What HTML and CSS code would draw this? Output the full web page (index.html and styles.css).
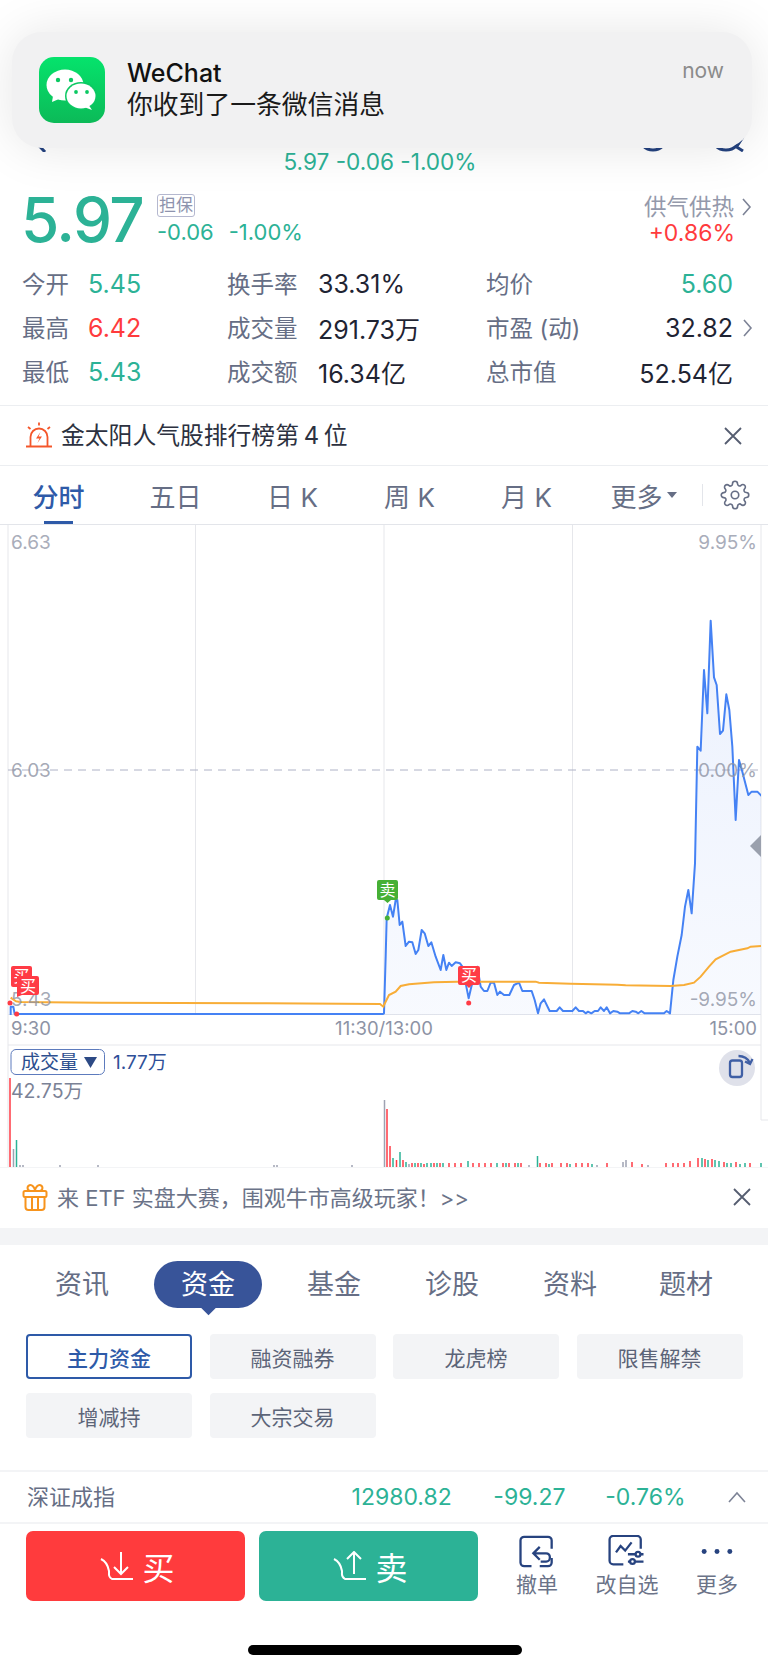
FILE: index.html
```html
<!DOCTYPE html>
<html lang="zh">
<head>
    <meta charset="UTF-8">
    <title>行情</title>
    <link rel="stylesheet" href="styles.css">
</head>
<body>
<div id="app">

    <div class="notify">
        <svg class="notify-icon" width="66" height="66" viewBox="0 0 66 66">
            <defs>
                <linearGradient id="wxGreen" x1="0" y1="0" x2="0" y2="1">
                    <stop offset="0" stop-color="#05e36c"/>
                    <stop offset="1" stop-color="#0cba58"/>
                </linearGradient>
            </defs>
            <rect width="66" height="66" rx="15" fill="url(#wxGreen)"/>
            <path d="M14 39l-1 6 7-3z" fill="#fff"/>
            <ellipse cx="26" cy="28" rx="18.500" ry="15.500" fill="#fff"/>
            <circle cx="19" cy="23" r="2.200" fill="#0bc862"/>
            <circle cx="32" cy="23" r="2.200" fill="#0bc862"/>
            <ellipse cx="42" cy="39" rx="16" ry="14" fill="#0bc862"/>
            <path d="M49 47l4 6-8-3z" fill="#fff"/>
            <ellipse cx="42" cy="39" rx="14.500" ry="12.500" fill="#fff"/>
            <circle cx="37" cy="35" r="1.900" fill="#0bc862"/>
            <circle cx="48" cy="35" r="1.900" fill="#0bc862"/>
        </svg>
        <div class="notify-text">
            <div class="notify-title">WeChat</div>
            <div class="notify-body">你收到了一条微信消息</div>
        </div>
        <div class="notify-time">now</div>
    </div>

    <div class="nav">
        <svg width="768" height="152" viewBox="0 0 768 152">
            <path d="M45 114L27 133L45 152" class="nav-stroke"/>
            <circle cx="653" cy="136" r="14" class="nav-stroke"/>
            <circle cx="726" cy="135" r="15" class="nav-stroke"/>
            <path d="M735 146L743 151M737 146L743 137" class="nav-stroke"/>
        </svg>
    </div>
    <div class="nav-sub">5.97 -0.06 -1.00%</div>

    <div class="quote">
        <div class="price">5.97</div>
        <div class="change">
            <span class="badge">担保</span>
            <div class="change-nums"><span>-0.06</span><span>-1.00%</span></div>
        </div>
        <div class="supply">
            <div class="supply-top">供气供热
                <svg width="10" height="18" viewBox="0 0 10 18"><path d="M1 1l7 8-7 8" class="chev"/></svg>
            </div>
            <div class="supply-num">+0.86%</div>
        </div>
    </div>

    <div class="stats">
        <span class="lbl">今开</span><span class="val down">5.45</span>
        <span class="lbl">换手率</span><span class="val">33.31%</span>
        <span class="lbl">均价</span><span class="val right down">5.60</span><span></span>

        <span class="lbl">最高</span><span class="val up">6.42</span>
        <span class="lbl">成交量</span><span class="val">291.73万</span>
        <span class="lbl">市盈 (动)</span><span class="val right">32.82</span>
        <svg class="stats-chev" width="10" height="18" viewBox="0 0 10 18"><path d="M1 1l7 8-7 8" class="chev"/></svg>

        <span class="lbl">最低</span><span class="val down">5.43</span>
        <span class="lbl">成交额</span><span class="val">16.34亿</span>
        <span class="lbl">总市值</span><span class="val right">52.54亿</span><span></span>
    </div>

    <div class="alert">
        <svg width="28" height="30" viewBox="0 0 28 30" fill="none" stroke="#f4562a" stroke-width="1.800">
            <path d="M5.500 25V16a8.500 8.500 0 0 1 17 0v9"/>
            <path d="M1 25.500h26" stroke-width="2"/>
            <path d="M14 1.500v3M3 6l2.500 2M25 6l-2.500 2"/>
            <path d="M15.500 11l-4.500 6.500h3.500L12.500 22l4.500-6.500h-3.500z" fill="#f4562a" stroke="none"/>
        </svg>
        <span class="alert-text">金太阳人气股排行榜第 4 位</span>
        <svg class="close" width="18" height="18" viewBox="0 0 18 18"><path d="M1 1l16 16M17 1L1 17"/></svg>
    </div>

    <div class="tabs">
        <div class="tab active">分时</div>
        <div class="tab">五日</div>
        <div class="tab">日 K</div>
        <div class="tab">周 K</div>
        <div class="tab">月 K</div>
        <div class="tab">更多<i class="caret"></i></div>
        <div class="tab-tool">
            <svg width="30" height="30" viewBox="0 0 24 24" fill="none" stroke="#666e85" stroke-width="1.300" stroke-linejoin="round">
                <circle cx="12" cy="12" r="3"/>
                <path d="M19.400 15a1.650 1.650 0 0 0 .33 1.820l.06.06a2 2 0 0 1 0 2.830 2 2 0 0 1-2.830 0l-.06-.06a1.650 1.650 0 0 0-1.820-.33 1.650 1.650 0 0 0-1 1.510V21a2 2 0 0 1-2 2 2 2 0 0 1-2-2v-.09A1.650 1.650 0 0 0 9 19.400a1.650 1.650 0 0 0-1.820.33l-.06.06a2 2 0 0 1-2.830 0 2 2 0 0 1 0-2.830l.06-.06a1.650 1.650 0 0 0 .33-1.820 1.650 1.650 0 0 0-1.510-1H3a2 2 0 0 1-2-2 2 2 0 0 1 2-2h.09A1.650 1.650 0 0 0 4.600 9a1.650 1.650 0 0 0-.33-1.820l-.06-.06a2 2 0 0 1 0-2.830 2 2 0 0 1 2.830 0l.06.06a1.650 1.650 0 0 0 1.820.33H9a1.650 1.650 0 0 0 1-1.510V3a2 2 0 0 1 2-2 2 2 0 0 1 2 2v.09a1.650 1.650 0 0 0 1 1.510 1.650 1.650 0 0 0 1.820-.33l.06-.06a2 2 0 0 1 2.830 0 2 2 0 0 1 0 2.830l-.06.06a1.650 1.650 0 0 0-.33 1.820V9a1.650 1.650 0 0 0 1.510 1H21a2 2 0 0 1 2 2 2 2 0 0 1-2 2h-.09a1.650 1.650 0 0 0-1.510 1z"/>
            </svg>
        </div>
    </div>

    <svg class="chart" width="768" height="642" viewBox="0 525 768 642">
        <defs>
            <linearGradient id="areaFill" x1="0" y1="0" x2="0" y2="1">
                <stop offset="0" stop-color="#4d80f0" stop-opacity=".11"/>
                <stop offset="1" stop-color="#4d80f0" stop-opacity=".04"/>
            </linearGradient>
        </defs>

        <!-- grid -->
        <path d="M8 525V1167M195.500 525V1014M384 525V1014M572.500 525V1014M761 525V1120M8 1045H761M761 1120H768M8 1014.500H761" class="grid"/>
        <path d="M8 770H761" class="dash"/>

        <!-- price + average, traced in 3x coordinates -->
        <svg x="8" y="525" width="753" height="490" viewBox="-1128 -195 2259 1470">
            <path class="price" d="M-1120 1290L-1120 1250L-1112 1250L-1108 1272L-3 1272L0 1270L5 1100L8 985L18 945L27 980L35 930L40 930L47 1005L55 995L65 1068L75 1055L85 1057L95 1092L103 1080L113 1020L122 1030L133 1068L142 1057L155 1100L170 1140L178 1095L187 1140L195 1118L203 1128L215 1117L228 1120L235 1130L247 1190L254 1225L262 1190L280 1130L290 1190L300 1203L310 1203L320 1178L330 1178L340 1215L348 1205L360 1215L376 1215L390 1185L405 1178L415 1203L443 1203L452 1230L462 1270L470 1240L480 1228L497 1263L518 1263L527 1252L537 1263L565 1263L575 1252L585 1263L597 1263L605 1270L612 1265L622 1270L632 1263L642 1263L650 1252L660 1263L668 1252L678 1270L688 1263L700 1265L708 1270L735 1270L745 1263L755 1265L763 1270L772 1263L782 1270L840 1270L848 1263L858 1270L868 1170L880 1100L893 1035L903 950L913 900L923 970L933 820L940 470L950 482L960 240L970 370L980 92L990 262L998 285L1008 432L1017 422L1027 313L1036 360L1045 470L1055 690L1065 510L1075 545L1093 615L1103 605L1120 605L1135 620L1160 620L1160 1290Z"/>
            <path class="avg" d="M-1120 1223L-1104 1234L-1092 1236L-852 1238L-352 1240L-12 1242L-2 1250L0 1245L15 1215L35 1205L50 1188L75 1183L150 1177L220 1175L455 1175L465 1178L560 1181L700 1184L725 1186L860 1188L900 1185L930 1178L950 1160L975 1130L995 1108L1040 1085L1090 1075L1100 1070L1135 1068"/>
        </svg>

        <!-- axis labels -->
        <text x="11" y="549" class="axis">6.63</text>
        <text x="757" y="549" class="axis end">9.95%</text>
        <text x="11" y="777" class="axis dim">6.03</text>
        <text x="757" y="777" class="axis end dim">0.00%</text>
        <text x="11" y="1006" class="axis dim">5.43</text>
        <text x="757" y="1006" class="axis end dim">-9.95%</text>
        <text x="11" y="1035" class="axis time">9:30</text>
        <text x="384" y="1035" class="axis time mid">11:30/13:00</text>
        <text x="757" y="1035" class="axis time end">15:00</text>
        <path d="M750 846L761 835V857Z" fill="#9aa0ad"/>

        <!-- trade flags -->
        <rect x="11" y="966" width="21" height="21" rx="2" fill="#ff3b45"/>
        <text x="21.500" y="982" class="flag">买</text>
        <path d="M17 976h20a2 2 0 0 1 2 2v15a2 2 0 0 1-2 2H22l-5 2Z" fill="#ff3b45"/>
        <text x="28" y="992" class="flag">买</text>
        <circle cx="10" cy="1003" r="2.500" fill="#ff3b45"/>
        <circle cx="16.700" cy="1014" r="2.500" fill="#ff3b45"/>

        <path d="M379 880h17a2 2 0 0 1 2 2v16a2 2 0 0 1-2 2h-5l-3.500 3-3.500-3h-5a2 2 0 0 1-2-2v-16a2 2 0 0 1 2-2Z" fill="#46b035"/>
        <text x="387.500" y="896" class="flag">卖</text>
        <circle cx="387.300" cy="918" r="2.500" fill="#46b035"/>

        <path d="M460 966h18a2 2 0 0 1 2 2v15a2 2 0 0 1-2 2h-6l-3 3-3-3h-6a2 2 0 0 1-2-2v-15a2 2 0 0 1 2-2Z" fill="#ff3b45"/>
        <text x="469" y="981" class="flag">买</text>
        <circle cx="468.700" cy="1003" r="2.500" fill="#ff3b45"/>

        <!-- volume -->
        <rect x="11" y="1049.500" width="93.500" height="25" rx="5" class="legend-box"/>
        <text x="21" y="1069" class="legend">成交量</text>
        <path d="M84 1057h13l-6.500 11z" fill="#2d4a85"/>
        <text x="113" y="1069" class="legend-val">1.77万</text>
        <text x="11" y="1098" class="axis vol-max">42.75万</text>
        <circle cx="737" cy="1068" r="18" fill="#dfe1ea"/>
        <rect x="730" y="1060.500" width="12" height="16.500" rx="2.500" class="rotate"/>
        <path d="M738.500 1056c5 0 9 2 11.500 7M745 1061.500l5 2.500 2.500-5" class="rotate"/>

        <g class="bars">
            <path class="bar-red" d="M10 1078V1167M387 1109V1167M390 1146V1167M396.500 1160V1167M403 1160V1167M412 1163V1167M418 1163V1167M424 1164V1167M434 1163V1167M440 1163V1167M449 1163V1167M455 1163V1167M461 1163V1167M473 1163V1167M479 1163V1167M485 1163V1167M491 1163V1167M503 1163V1167M509 1163V1167M515 1163V1167M521 1163V1167M540 1163V1167M546 1163V1167M552 1163V1167M561 1163V1167M567 1163V1167M576 1163V1167M582 1163V1167M588 1163V1167M607 1163V1167M632 1162V1167M642 1164V1167M666 1163V1167M673 1163V1167M678 1163V1167M684 1163V1167M690 1161V1167M698 1158V1167M705 1159V1167M712 1159V1167M724 1162V1167M736 1162V1167M750 1163V1167"/>
            <path class="bar-green" d="M16.500 1140V1167M393 1158V1167M400 1152V1167M406 1162V1167M415 1163V1167M421 1163V1167M427 1163V1167M431 1163V1167M437 1163V1167M443 1163V1167M468 1161V1167M497 1163V1167M506 1163V1167M518 1163V1167M537.500 1156V1167M549 1164V1167M570 1164V1167M592 1164V1167M702 1158V1167M708 1160V1167M715 1160V1167M719 1161V1167M727 1163V1167M731 1163V1167M740 1164V1167M745 1163V1167M761 1163V1167"/>
            <path class="bar-gray" d="M13.500 1149V1167M20 1165V1167M23 1165V1167M60 1165V1167M98 1165V1167M274 1165V1167M277 1165V1167M352 1165V1167M384.500 1100V1167M409 1164V1167M529 1165V1167M597 1165V1167M623 1162V1167M626 1160V1167M648 1165V1167"/>
        </g>
    </svg>

    <div class="promo">
        <svg width="26" height="28" viewBox="0 0 26 28" fill="none" stroke="#f7941d" stroke-width="2" stroke-linejoin="round">
            <rect x="1.500" y="8" width="23" height="6" rx="1.500"/>
            <path d="M3.500 14v10a3 3 0 0 0 3 3h13a3 3 0 0 0 3-3V14"/>
            <path d="M10 14v13M16 14v13"/>
            <path d="M13 8H8.500a3 3 0 0 1-1-5.800c2.500-.7 5.500 2.300 5.500 5.800zM13 8h4.500a3 3 0 0 0 1-5.800C16 1.500 13 4.500 13 8z"/>
        </svg>
        <span class="promo-text">来 ETF 实盘大赛，围观牛市高级玩家！&gt;&gt;</span>
        <svg class="close" width="18" height="18" viewBox="0 0 18 18"><path d="M1 1l16 16M17 1L1 17"/></svg>
    </div>

    <div class="gap"></div>

    <div class="sub-tabs">
        <div class="sub-tab">资讯</div>
        <div class="sub-tab active"><span>资金</span></div>
        <div class="sub-tab">基金</div>
        <div class="sub-tab">诊股</div>
        <div class="sub-tab">资料</div>
        <div class="sub-tab">题材</div>
    </div>

    <div class="chips">
        <div class="chip active">主力资金</div>
        <div class="chip">融资融券</div>
        <div class="chip">龙虎榜</div>
        <div class="chip">限售解禁</div>
        <div class="chip">增减持</div>
        <div class="chip">大宗交易</div>
    </div>

    <div class="index-row">
        <span class="index-name">深证成指</span>
        <span class="index-num n1">12980.82</span>
        <span class="index-num n2">-99.27</span>
        <span class="index-num n3">-0.76%</span>
        <svg width="18" height="12" viewBox="0 0 18 12"><path d="M1 11l8-9 8 9" class="chev"/></svg>
    </div>

    <div class="actions">
        <div class="trade buy">
            <svg width="34" height="30" viewBox="0 0 34 30"><path d="M21 1v22M14 16l7 7 7-7M1 8c4 2 7 6 8 12v2a6 6 0 0 0 3 6h21"/></svg>
            <span>买</span>
        </div>
        <div class="trade sell">
            <svg width="34" height="30" viewBox="0 0 34 30"><path d="M21 23V1M14 8l7-7 7 7M1 8c4 2 7 6 8 12v2a6 6 0 0 0 3 6h21"/></svg>
            <span>卖</span>
        </div>
        <div class="tool">
            <svg width="40" height="36" viewBox="0 0 40 36" class="tool-icon">
                <path d="M14 34H6a4 4 0 0 1-4-4V6a4 4 0 0 1 4-4h26a4 4 0 0 1 4 4v9M36 25v5a4 4 0 0 1-4 4h-9"/>
                <path d="M23 13l-7 7 7 7M16 20h14a4 4 0 0 1 4 4v1a4 4 0 0 1-4 4h-6"/>
            </svg>
            <span>撤单</span>
        </div>
        <div class="tool">
            <svg width="40" height="36" viewBox="0 0 40 36" class="tool-icon">
                <path d="M16 32H5a4 4 0 0 1-4-4V5a4 4 0 0 1 4-4h26a4 4 0 0 1 4 4v10"/>
                <path d="M8 19l5-7 5 5 7-9M21 21h17M21 29h17"/>
                <circle cx="32" cy="21" r="2.600" class="knob"/>
                <circle cx="26" cy="29" r="2.600" class="knob"/>
            </svg>
            <span>改自选</span>
        </div>
        <div class="tool">
            <svg width="40" height="36" viewBox="0 0 40 36"><g fill="#27437f"><circle cx="6" cy="18" r="2.700"/><circle cx="20" cy="18" r="2.700"/><circle cx="34" cy="18" r="2.700"/></g></svg>
            <span>更多</span>
        </div>
    </div>

    <div class="home-bar"></div>
</div>
</body>
</html>
```
FILE: styles.css
```css
body {
    margin: 0;
    padding: 0;
    background: #fff;
    font-family: Inter, "Noto Sans CJK SC", sans-serif;
    color: #1f2433;
}

#app {
    position: relative;
    width: 768px;
    height: 1669px;
    overflow: hidden;
}

svg {
    display: block;
}

/* notification */
.notify {
    position: absolute;
    top: 32px;
    left: 12px;
    width: 740px;
    height: 116px;
    box-sizing: border-box;
    padding: 25px 28px 0 27px;
    display: flex;
    background: #f1f1f2;
    border-radius: 30px;
    box-shadow: 0 0 50px rgba(0, 0, 0, .1);
    z-index: 5;
}

.notify-text {
    margin-left: 22px;
}

.notify-title {
    font-size: 25px;
    line-height: 32px;
    font-weight: 500;
    color: #111;
}

.notify-body {
    font-size: 25.800px;
    line-height: 32px;
    color: #1a1a1a;
}

.notify-time {
    margin-left: auto;
    font-size: 21px;
    line-height: 28px;
    color: #8b8b8b;
}

/* nav under the banner */
.nav {
    height: 148px;
}

.nav-stroke {
    fill: none;
    stroke: #24427f;
    stroke-width: 3;
}

.nav-sub {
    height: 28px;
    line-height: 28px;
    padding-right: 8px;
    text-align: center;
    font-size: 22.600px;
    color: #2cb296;
}

/* quote */
.quote {
    height: 86px;
    box-sizing: border-box;
    display: flex;
    align-items: center;
    padding: 0 16px 0 21px;
}

.price {
    width: 136px;
    font-size: 62px;
    font-weight: 500;
    letter-spacing: -1.500px;
    color: #2cb296;
}

.change {
    margin-top: 2px;
}

.badge {
    display: block;
    width: 38px;
    box-sizing: border-box;
    height: 23px;
    line-height: 21px;
    border: 1px solid #b5b8cf;
    border-radius: 3px;
    font-size: 17px;
    text-align: center;
    color: #8e93ad;
}

.change-nums {
    display: flex;
    gap: 15px;
    margin-top: 2px;
    font-size: 22px;
    line-height: 27px;
    color: #2cb296;
}

.supply {
    margin-left: auto;
    text-align: right;
    margin-top: 2px;
}

.supply-top {
    display: flex;
    align-items: center;
    gap: 8px;
    font-size: 22.500px;
    line-height: 26px;
    color: #9499ab;
}

.supply-num {
    margin-right: 17px;
    font-size: 23px;
    line-height: 26px;
    color: #ff3b3d;
}

.chev {
    fill: none;
    stroke: #7d8396;
    stroke-width: 1.600;
}

/* stats */
.stats {
    height: 143px;
    padding: 0 15px 0 22px;
    display: grid;
    grid-template-columns: 66px 139px 91px 168px 100px 1fr 20px;
    grid-auto-rows: 44px;
    align-items: center;
    font-size: 23.500px;
}

.stats-chev {
    justify-self: end;
}

.lbl {
    margin-bottom: 3px;
    color: #666e85;
}

.val {
    font-size: 25px;
    color: #1f2433;
}

.val.right {
    text-align: right;
}

.stats .down {
    color: #2cb296;
}

.stats .up {
    color: #ff3b3d;
}

/* alert strip */
.alert {
    height: 59px;
    display: flex;
    align-items: center;
    padding: 0 26px 0 25px;
    border-top: 1px solid #eceef1;
    border-bottom: 1px solid #eceef1;
    font-size: 23.800px;
    color: #2c3140;
}

.alert-text {
    margin-left: 8px;
    padding-bottom: 4px;
    word-spacing: -2px;
}

.close {
    margin-left: auto;
}

.close path {
    fill: none;
    stroke: #555d70;
    stroke-width: 1.800;
}

/* period tabs */
.tabs {
    height: 58px;
    display: flex;
    border-bottom: 1px solid #e3e5ea;
    font-size: 26px;
    color: #666e85;
}

.tab {
    position: relative;
    width: 117px;
    flex: none;
    display: flex;
    align-items: center;
    justify-content: center;
}

.tab.active {
    color: #2e5aa8;
    font-weight: 500;
}

.tab.active::after {
    content: "";
    position: absolute;
    left: 44px;
    bottom: 0;
    width: 29px;
    height: 3px;
    background: #2e5aa8;
}

.caret {
    width: 0;
    height: 0;
    margin-left: 4px;
    border-top: 6px solid #666e85;
    border-left: 5px solid transparent;
    border-right: 5px solid transparent;
}

.tab-tool {
    flex: 1;
    display: flex;
    align-items: center;
    justify-content: center;
    position: relative;
}

.tab-tool::before {
    content: "";
    position: absolute;
    left: 0;
    top: 18px;
    height: 22px;
    width: 1px;
    background: #e3e5ea;
}

/* chart */
.grid {
    fill: none;
    stroke: #e6e7eb;
    stroke-width: 1;
}

.dash {
    fill: none;
    stroke: #aeb2c6;
    stroke-width: 1;
    stroke-dasharray: 8 6;
}

.price {
    fill: url(#areaFill);
    stroke: #4582f4;
    stroke-width: 6;
    stroke-linejoin: round;
}

.avg {
    fill: none;
    stroke: #f8ad37;
    stroke-width: 6;
}

.axis {
    font-size: 19px;
    fill: #a9adba;
}

.axis.dim {
    fill: #8e93a3;
    fill-opacity: .8;
}

.axis.time {
    font-size: 18.500px;
    fill: #8d93a5;
}

.axis.end {
    text-anchor: end;
}

.axis.mid {
    text-anchor: middle;
}

.axis.vol-max {
    fill: #7b8296;
    font-size: 19.500px;
}

.flag {
    font-size: 16px;
    fill: #fff;
    text-anchor: middle;
}

.legend-box {
    fill: #fff;
    stroke: #5d7bbd;
    stroke-width: 1;
}

.legend {
    font-size: 19px;
    fill: #2d4f8f;
}

.legend-val {
    font-size: 19px;
    fill: #2f5099;
}

.rotate {
    fill: none;
    stroke: #3f5fa5;
    stroke-width: 2.300;
}

.bars path {
    fill: none;
    stroke-width: 1.500;
}

.bar-red {
    stroke: #ff3b45;
}

.bar-green {
    stroke: #2cb296;
}

.bar-gray {
    stroke: #9ea2b2;
}

/* promo */
.promo {
    height: 61px;
    box-sizing: border-box;
    display: flex;
    align-items: center;
    padding: 0 17px 2px 22px;
    border-top: 1px solid #f3f4f6;
    font-size: 22px;
    color: #6b7388;
}

.promo-text {
    margin-left: 9px;
    padding-bottom: 2px;
}

.gap {
    height: 17px;
    background: #f3f4f6;
}

/* section tabs */
.sub-tabs {
    height: 89px;
    box-sizing: border-box;
    padding: 16px 0 0 21px;
    display: grid;
    grid-template-columns: 122px 130px 122px 114px 122px 110px;
    align-items: start;
    font-size: 27px;
    color: #666e85;
    text-align: center;
}

.sub-tab {
    line-height: 47px;
}

.sub-tab.active {
    position: relative;
    margin: 0 11px;
    height: 47px;
    border-radius: 24px;
    background: #385499;
    color: #fff;
}

.sub-tab.active::after {
    content: "";
    position: absolute;
    left: 50%;
    bottom: -5px;
    width: 11px;
    height: 11px;
    margin-left: -5.500px;
    transform: rotate(45deg);
    background: #385499;
    z-index: -1;
}

.chips {
    height: 136px;
    box-sizing: border-box;
    padding: 0 26px;
    display: grid;
    grid-template-columns: repeat(4, 166px);
    column-gap: 17.500px;
    row-gap: 14px;
    grid-auto-rows: 45px;
    align-content: start;
    font-size: 21px;
    color: #5c6478;
}

.chip {
    display: flex;
    align-items: center;
    justify-content: center;
    background: #f3f4f6;
    border-radius: 4px;
}

.chip.active {
    background: #fff;
    box-sizing: border-box;
    border: 2px solid #2e5aa8;
    color: #2e5aa8;
    font-weight: 500;
}

/* index strip */
.index-row {
    height: 50px;
    display: flex;
    align-items: center;
    padding: 0 22px 0 27px;
    border-top: 2px solid #f3f4f6;
    border-bottom: 2px solid #f3f4f6;
    font-size: 23px;
    color: #2cb296;
}

.index-name {
    width: 325px;
    padding-bottom: 5px;
    font-size: 22px;
    color: #666e85;
}

.index-num.n1 {
    width: 142px;
}

.index-num.n2 {
    width: 112px;
}

.index-num.n3 {
    width: 123px;
}

/* bottom actions */
.actions {
    display: flex;
    height: 70px;
    padding: 7px 4px 0 26px;
}

.trade {
    width: 219px;
    height: 70px;
    margin-right: 14px;
    padding-left: 4px;
    box-sizing: border-box;
    display: flex;
    align-items: center;
    justify-content: center;
    gap: 8px;
    border-radius: 7px;
    color: #fff;
    font-size: 32px;
}

.trade path {
    fill: none;
    stroke: #fff;
    stroke-width: 2;
}

.buy {
    background: #ff3b3d;
}

.sell {
    background: #2cb296;
}

.tool {
    width: 90px;
    flex: none;
    margin-top: 4px;
    display: flex;
    flex-direction: column;
    align-items: center;
    font-size: 21px;
    line-height: 33px;
    color: #6b7388;
}

.tool-icon path,
.tool-icon circle {
    fill: none;
    stroke: #27437f;
    stroke-width: 2.500;
}

.tool-icon .knob {
    fill: #fff;
}

.home-bar {
    width: 274px;
    height: 10px;
    margin: 44px 0 0 248px;
    border-radius: 5px;
    background: #000;
}
```
